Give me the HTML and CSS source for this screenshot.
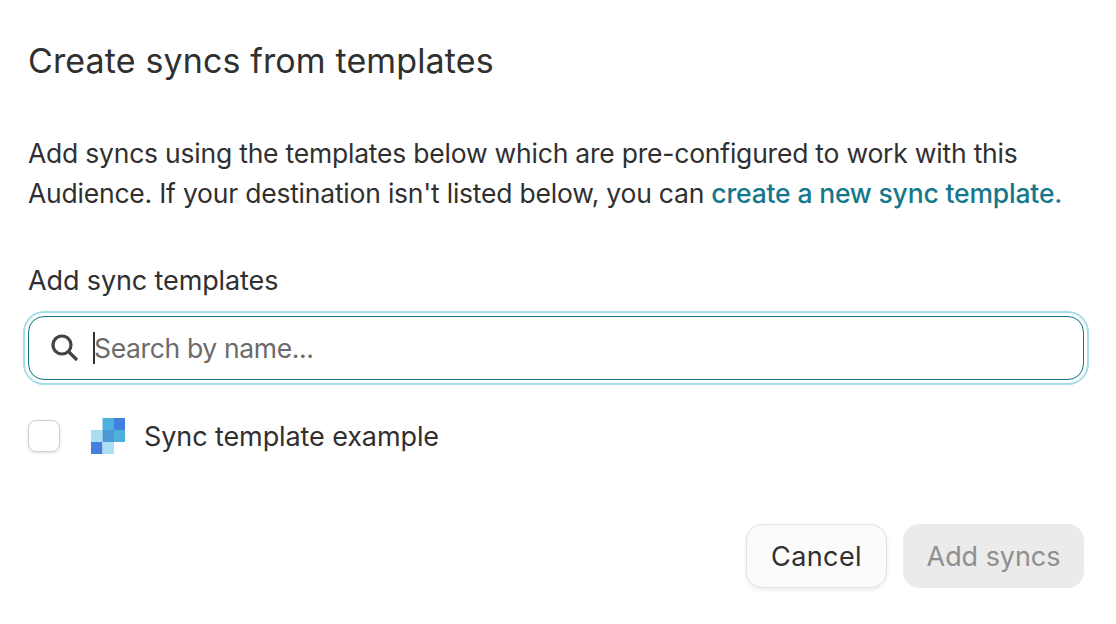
FILE: index.html
```html
<!DOCTYPE html>
<html lang="en">
<head>
<meta charset="utf-8">
<title>Create syncs from templates</title>
<link rel="stylesheet" href="styles.css">
</head>
<body>
<main class="dialog">
  <h1 class="title">Create syncs from templates</h1>
  <p class="intro">Add syncs using the templates below which are pre-configured to work with this Audience. If your destination isn't listed below, you can <a class="link" href="#">create a new sync template.</a></p>
  <label class="label" for="search">Add sync templates</label>
  <div class="search">
    <svg class="search-icon" viewBox="0 0 28 28" width="28" height="28" aria-hidden="true"><circle cx="11" cy="11" r="9" fill="none" stroke="#444" stroke-width="3.200"/><path d="M17.500 17.500l8.500 8.500" fill="none" stroke="#444" stroke-width="3.200"/></svg>
    <span class="caret"></span>
    <span class="placeholder" id="search">Search by name...</span>
  </div>
  <div class="option">
    <span class="checkbox"></span>
    <svg class="logo" viewBox="0 0 34 36" width="34" height="36" aria-hidden="true">
      <rect x="11.500" y="0" width="11.500" height="12" fill="#4fb0de"/>
      <rect x="23" y="0" width="11" height="12" fill="#437fdf"/>
      <rect x="0" y="12" width="11.500" height="12" fill="#a9def3"/>
      <rect x="11.500" y="12" width="11.500" height="12" fill="#4a9ad8"/>
      <rect x="23" y="12" width="11" height="12" fill="#4fb0de"/>
      <rect x="0" y="24" width="11.500" height="12" fill="#437fdf"/>
      <rect x="11.500" y="24" width="11.500" height="12" fill="#a9def3"/>
    </svg>
    <span class="option-name">Sync template example</span>
  </div>
  <div class="actions">
    <button class="btn btn-cancel" type="button">Cancel</button>
    <button class="btn btn-add" type="button" disabled>Add syncs</button>
  </div>
</main>
</body>
</html>
```
FILE: styles.css
```css
* { box-sizing: border-box; }
html, body { margin: 0; background: #fff; }
body { width: 1116px; height: 624px; overflow: hidden; font-family: Inter, "Liberation Sans", sans-serif; color: #303030; }
.dialog { padding: 40px 32px 0 28px; display: flex; flex-direction: column; }
.title { margin: 0; font-size: 34px; line-height: 42px; font-weight: 400; letter-spacing: 0.13px; }
.intro { margin: 51px 0 0; font-size: 26.5px; line-height: 40px; letter-spacing: -0.22px; width: 1056px; }
.link { color: #14788c; text-decoration: none; font-weight: 450; letter-spacing: -0.18px; }
.label { margin-top: 48px; font-size: 27px; line-height: 40px; letter-spacing: -0.12px; display: block; }
.search { margin-top: 15px; height: 64px; border: 1px solid #14788c; border-radius: 16px; display: flex; align-items: center; padding-left: 22px; box-shadow: 0 0 0 3px #fff, 0 0 0 5px #a9dbe8; }
.search-icon { flex: none; }
.caret { width: 2px; height: 32px; background: #333; margin-left: 14px; flex: none; }
.placeholder { font-size: 26.5px; letter-spacing: -0.35px; color: #6b6b6b; margin-left: -1px; }
.option { margin-top: 40px; height: 32px; display: flex; align-items: center; }
.checkbox { width: 32px; height: 32px; border: 1px solid #cfcfcf; border-radius: 8px; background: #fff; box-shadow: 0 1px 3px rgba(0,0,0,.12); flex: none; }
.logo { margin-left: 31px; flex: none; }
.option-name { margin: 2px 0 0 19px; font-size: 27px; line-height: 34px; letter-spacing: -0.1px; }
.actions { margin-top: 72px; display: flex; justify-content: flex-end; gap: 16px; }
.btn { height: 64px; border-radius: 16px; font: inherit; font-size: 27px; padding: 0; }
.btn-cancel { width: 141px; background: #fbfbfb; border: 1px solid #e2e2e2; color: #303030; box-shadow: 0 2px 4px rgba(0,0,0,.08); letter-spacing: 0.4px; }
.btn-add { width: 181px; background: #ebebeb; border: 0; color: #8f8f8f; letter-spacing: -0.05px; }
```
